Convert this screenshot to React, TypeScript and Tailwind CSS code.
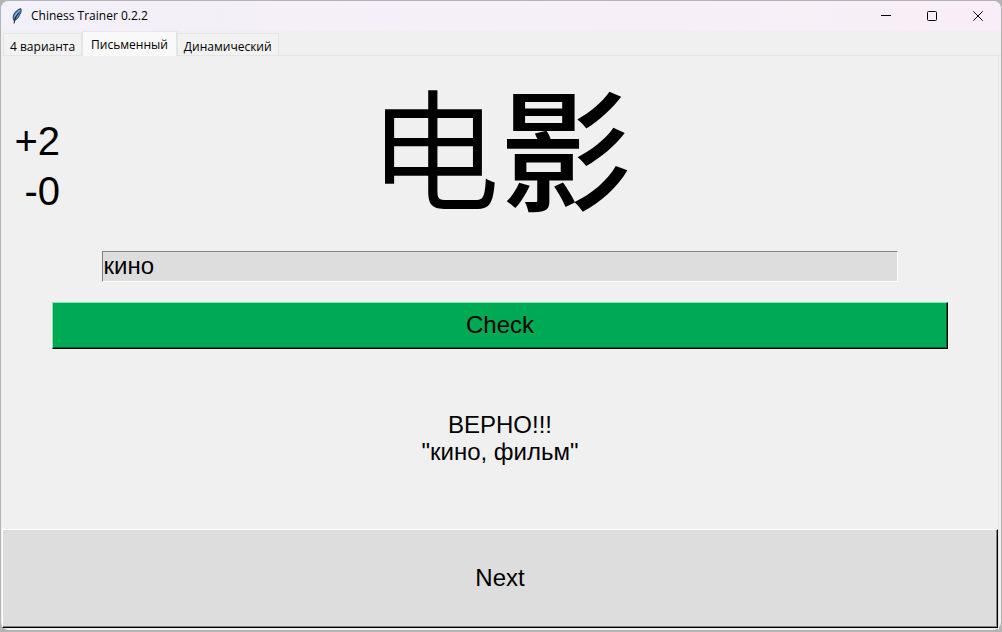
import { useState } from 'react';

const tabs = ['4 варианта', 'Письменный', 'Динамический'];

function Feather() {
  return (
    <svg width="12" height="16" viewBox="0 0 12 16" aria-hidden="true">
      <path d="M9.8.6C7 1.2 3.6 4 2.5 7.2c-.5 1.8-.5 3.8.4 5.3 2.4-.6 4.700-2.700 5.600-5.300L8 6.700l1.400-.9C10.300 3.700 10.400 1.800 9.800.6Z" fill="#4a8fd6" stroke="#17202c" strokeWidth=".8" />
      <path d="M8 4.500C5.600 7 4 10 3 15.400" fill="none" stroke="#10151d" strokeWidth="1" />
      <path d="M8.600 2.500C7 3.600 5.200 5.500 4.300 8" fill="none" stroke="#8fc2ee" strokeWidth="1" />
    </svg>
  );
}

function TitleBar() {
  return (
    <header className="flex h-[30px] shrink-0 items-center rounded-t-lg bg-gradient-to-r from-[#f2f0f9] to-[#f9eef7]">
      <div className="flex flex-1 items-center gap-2 pl-[10px]">
        <Feather />
        <h1 className="font-['Open_Sans',sans-serif] text-xs">Chiness Trainer 0.2.2</h1>
      </div>
      <button aria-label="Minimize" className="flex h-full w-[46px] items-center justify-center">
        <svg width="10" height="10" viewBox="0 0 10 10"><path d="M0 4.500h10" stroke="#000" /></svg>
      </button>
      <button aria-label="Maximize" className="flex h-full w-[46px] items-center justify-center">
        <svg width="10" height="10" viewBox="0 0 10 10"><rect x=".5" y=".5" width="9" height="9" rx="1" fill="none" stroke="#000" /></svg>
      </button>
      <button aria-label="Close" className="flex h-full w-[46px] items-center justify-center">
        <svg width="10" height="10" viewBox="0 0 10 10"><path d="M.3.3l9.400 9.400M9.700.3L.3 9.700" stroke="#000" /></svg>
      </button>
    </header>
  );
}

export default function App() {
  const [active, setActive] = useState(1);
  const [answer, setAnswer] = useState('кино');

  return (
    <div className="flex h-screen flex-col bg-[#b4b4b4] px-px pt-px pb-[2px] font-['Liberation_Sans','Noto_Sans_CJK_SC',sans-serif] text-black">
      <div className="flex min-h-0 flex-1 flex-col rounded-lg bg-[#f0f0f0]">
        <TitleBar />
        <div role="tablist" className="flex h-[25px] shrink-0 items-end border-b border-[#e5e5e5] pl-[2px] font-['Open_Sans',sans-serif] text-xs">
          {tabs.map((tab, i) => (
            <button
              key={tab}
              role="tab"
              aria-selected={i === active}
              onClick={() => setActive(i)}
              className={
                i === active
                  ? '-mb-px flex h-[25px] items-center border border-b-0 border-[#e5e5e5] bg-[#f9f9f9] px-2 pt-px'
                  : 'flex h-[22px] items-center border border-b-0 border-[#e5e5e5] bg-[#f2f2f2] px-[6px] pt-1'
              }
            >
              {tab}
            </button>
          ))}
        </div>
        <main className="mr-[2px] flex min-h-0 flex-1 flex-col border-r border-[#e5e5e5] pl-px">
          <div className="grid grid-cols-[1fr_auto_1fr]">
            <div className="w-[58px] pt-[60px] text-right text-[40px] leading-[50px]">
              <p>+2</p>
              <p>-0</p>
            </div>
            <p lang="zh" className="pt-1 pb-2 font-['Noto_Sans_CJK_SC',sans-serif] text-[132px] leading-[168px] font-[350]">
              电<span className="font-medium">影</span>
            </p>
          </div>
          <input
            aria-label="Перевод"
            value={answer}
            onChange={(e) => setAnswer(e.target.value)}
            className="mx-auto mt-[15px] h-[31px] w-4/5 shrink-0 border border-t-[#858585] border-r-white border-b-white border-l-[#858585] bg-[#dddddd] px-px pb-[2px] text-2xl outline-none"
          />
          <button className="mx-auto mt-5 h-[47px] w-9/10 shrink-0 border border-t-[#80e8b0] border-r-black border-b-black border-l-[#80e8b0] bg-[#00aa55] pb-px text-2xl shadow-[inset_-1px_-1px_0_#006633]">
            Check
          </button>
          <p aria-live="polite" className="mt-[62px] text-center text-2xl leading-[27px]">
            ВЕРНО!!!<br />"кино, фильм"
          </p>
          <button className="mt-auto mb-[2px] h-[99px] shrink-0 border border-t-white border-r-black border-b-black border-l-white bg-[#dddddd] pb-px text-2xl shadow-[inset_-1px_-1px_0_#858585]">
            Next
          </button>
        </main>
      </div>
    </div>
  );
}
